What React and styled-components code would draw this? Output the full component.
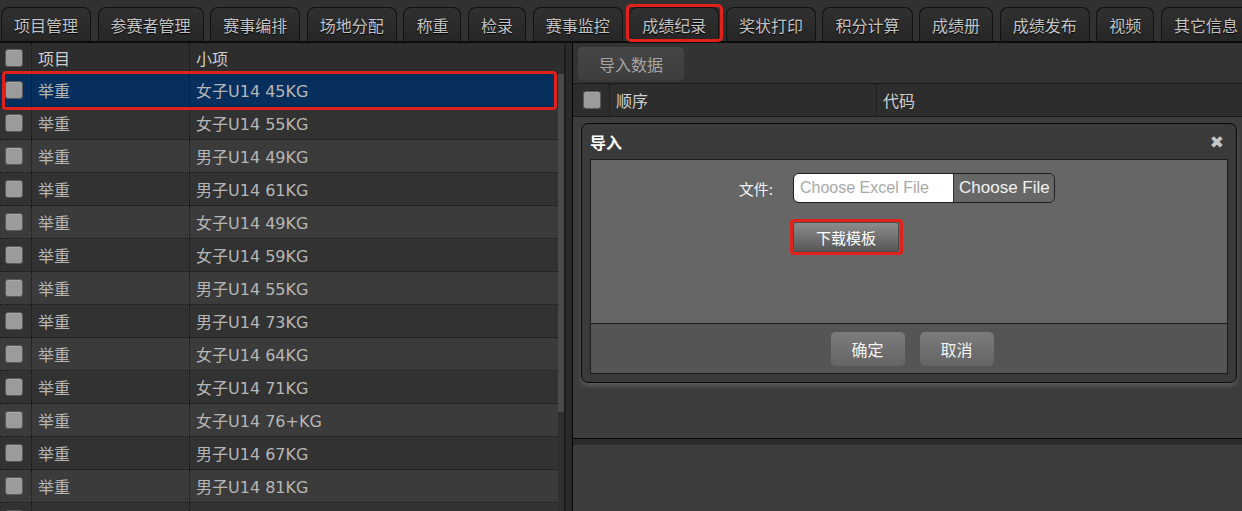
import styled, { createGlobalStyle, css } from "styled-components";

const GlobalStyle = createGlobalStyle`
  html, body {
    margin: 0;
    padding: 0;
    background: #3c3c3c;
    overflow: hidden;
  }
  body {
    font-family: "DejaVu Sans", "Noto Sans CJK SC", sans-serif;
    font-size: 16px;
  }
  * {
    box-sizing: border-box;
  }
`;

const RED = "#e3211b";

const Page = styled.div`
  width: 1242px;
  height: 511px;
  display: flex;
  flex-direction: column;
  overflow: hidden;
`;

const TabBar = styled.div`
  height: 43px;
  flex: none;
  display: flex;
  align-items: flex-end;
  gap: 6.6px;
  padding-left: 1px;
  background: #313131;
  border-bottom: 2px solid #0c0c0c;
  white-space: nowrap;
`;

const Tab = styled.div`
  position: relative;
  flex: none;
  height: 34px;
  padding: 0 12px;
  display: flex;
  align-items: center;
  border: 1px solid #121212;
  border-bottom: none;
  border-radius: 8px 8px 0 0;
  background: linear-gradient(#303030, #262626);
  color: #c2c2c2;
  font-family: "Noto Sans CJK SC", sans-serif;
  font-size: 16px;
  text-shadow: 0 1px 1px #000;

  ${(p) =>
    p.$marked &&
    css`
      &::after {
        content: "";
        position: absolute;
        left: -4px;
        right: -5px;
        top: -4px;
        bottom: -1px;
        border: 3.5px solid ${RED};
        border-radius: 5px;
      }
    `}
`;

const Main = styled.div`
  flex: 1;
  display: flex;
  min-height: 0;
`;

const LeftPanel = styled.div`
  width: 564px;
  flex: none;
  display: flex;
`;

const Grid = styled.div`
  width: 558px;
  flex: none;
  background: #333;
`;

const ScrollTrack = styled.div`
  width: 6px;
  flex: none;
  display: flex;
  flex-direction: column;
  background: #2f2f2f;
`;

const ScrollHead = styled.div`
  height: 31px;
  background: #2d2d2d;
`;

const ScrollThumb = styled.div`
  height: 338px;
  background: #4a4a4a;
`;

const Row = styled.div`
  position: relative;
  height: ${(p) => (p.$head ? 31 : 33)}px;
  display: grid;
  grid-template-columns: 32px 158px 1fr;
  background: ${(p) =>
    p.$selected ? "#062f5e" : p.$head ? "#2d2d2d" : p.$light ? "#3b3b3b" : "#323232"};
  border-bottom: 1px dotted #151515;
  color: ${(p) => (p.$head ? "#cfcfcf" : "#b6b6b6")};

  ${(p) =>
    p.$selected &&
    css`
      z-index: 1;

      &::after {
        content: "";
        position: absolute;
        left: 2px;
        right: 1px;
        top: -3.5px;
        bottom: -4px;
        border: 3.5px solid ${RED};
        border-radius: 4px;
      }
    `}
`;

const Cell = styled.div`
  display: flex;
  align-items: center;
  padding-left: ${(p) => (p.$box ? 5 : 6)}px;
  border-right: ${(p) => (p.$last ? "none" : "1px dotted #151515")};
  overflow: hidden;
  white-space: nowrap;
`;

const CheckBox = styled.span`
  width: 18px;
  height: 18px;
  border-radius: 3px;
  background: #9b9b9b;
  border: 1px solid #5a5a5a;
  box-shadow: inset 0 1px 0 #aaa;
`;

const Splitter = styled.div`
  width: 9px;
  flex: none;
  background: #2a2a2a;
  border-left: 2px solid #1c1c1c;
  border-right: 1px solid #050505;
`;

const RightPanel = styled.div`
  position: relative;
  flex: 1;
  display: flex;
  flex-direction: column;
`;

const Toolbar = styled.div`
  height: 40px;
  flex: none;
  padding: 4px 5px 0;
  background: #333;
`;

const ToolButton = styled.button`
  height: 34px;
  padding: 0 21px;
  border: none;
  border-radius: 5px;
  background: linear-gradient(#464646, #3d3d3d);
  color: #a6a6a6;
  font-family: "Noto Sans CJK SC", sans-serif;
  font-size: 16px;
`;

const HeadRow = styled.div`
  height: 34px;
  flex: none;
  display: grid;
  grid-template-columns: 37px 267px 1fr;
  background: #2d2d2d;
  border-top: 1px solid #1a1a1a;
  border-bottom: 1px solid #1a1a1a;
  color: #cfcfcf;
`;

const HeadBoxCell = styled(Cell)`
  padding-left: 10px;
`;

const GridBody = styled.div`
  height: 322px;
  flex: none;
  background: #3c3c3c;
  border-bottom: 1px solid #050505;
`;

const Band = styled.div`
  height: 6px;
  flex: none;
  background: #2b2b2b;
`;

const Rest = styled.div`
  flex: 1;
  background: #3c3c3c;
`;

const Dialog = styled.div`
  position: absolute;
  left: 8px;
  top: 80px;
  width: 656px;
  height: 260px;
  display: flex;
  flex-direction: column;
  padding: 0 8px 8px;
  background: #3a3a3a;
  border: 1px solid #0a0a0a;
  border-radius: 7px;
  box-shadow: 0 3px 4px rgba(150, 150, 150, 0.35);
`;

const DialogTitle = styled.div`
  height: 35px;
  flex: none;
  display: flex;
  align-items: center;
  justify-content: space-between;
  color: #fff;
  font-family: "Noto Sans CJK SC", sans-serif;
  font-weight: bold;
  font-size: 16px;
`;

const Close = styled.span`
  color: #c4c4c4;
  font-family: "DejaVu Sans", sans-serif;
  font-size: 17px;
  margin-right: 4px;
`;

const DialogFrame = styled.div`
  flex: 1;
  display: flex;
  flex-direction: column;
  border: 1px solid #1c1c1c;
`;

const DialogBody = styled.div`
  height: 164px;
  flex: none;
  background: #666;
  border-bottom: 1px solid #1c1c1c;
  padding: 13px 0 0 144px;
  display: grid;
  grid-template-columns: 58px auto;
  grid-auto-rows: min-content;
  row-gap: 19px;
  justify-content: start;
`;

const Label = styled.label`
  align-self: center;
  text-align: right;
  padding-right: 20px;
  color: #f2f2f2;
  font-family: "Noto Sans CJK SC", sans-serif;
  font-size: 15px;
`;

const FileBox = styled.div`
  width: 262px;
  height: 30px;
  display: flex;
  border: 1px solid #1e1e1e;
  border-radius: 6px;
  overflow: hidden;
  font-family: "Liberation Sans", sans-serif;
`;

const FileText = styled.div`
  width: 159px;
  flex: none;
  display: flex;
  align-items: center;
  padding-left: 6px;
  background: #fff;
  color: #a9a9a9;
  font-size: 16px;
`;

const FileButton = styled.div`
  flex: 1;
  display: flex;
  align-items: center;
  padding-left: 5px;
  background: #676767;
  border-left: 1px solid #333;
  color: #f2f2f2;
  font-size: 17px;
`;

const TemplateButton = styled.button`
  position: relative;
  grid-column: 2;
  justify-self: start;
  width: 106px;
  height: 30px;
  border: 1px solid #4a4a4a;
  border-radius: 3px;
  background: linear-gradient(#8c8c8c, #575757);
  color: #fff;
  font-family: "Noto Sans CJK SC", sans-serif;
  font-size: 15px;

  &::after {
    content: "";
    position: absolute;
    left: -4.5px;
    right: -5px;
    top: -4.5px;
    bottom: -3.5px;
    border: 3.5px solid ${RED};
    border-radius: 4px;
  }
`;

const DialogFooter = styled.div`
  flex: 1;
  display: flex;
  justify-content: center;
  align-items: flex-start;
  gap: 15px;
  padding-top: 8px;
  padding-left: 6px;
  background: #555;
`;

const FooterButton = styled.button`
  width: 74px;
  height: 34px;
  border: none;
  border-radius: 5px;
  background: linear-gradient(#7c7c7c, #646464);
  color: #f4f4f4;
  font-family: "Noto Sans CJK SC", sans-serif;
  font-size: 16px;
`;

const tabs = [
  "项目管理", "参赛者管理", "赛事编排", "场地分配", "称重", "检录", "赛事监控",
  "成绩纪录", "奖状打印", "积分计算", "成绩册", "成绩发布", "视频", "其它信息",
];

const events = [
  "女子U14 45KG", "女子U14 55KG", "男子U14 49KG", "男子U14 61KG", "女子U14 49KG",
  "女子U14 59KG", "男子U14 55KG", "男子U14 73KG", "女子U14 64KG", "女子U14 71KG",
  "女子U14 76+KG", "男子U14 67KG", "男子U14 81KG",
];

export default function App() {
  return (
    <Page>
      <GlobalStyle />
      <TabBar>
        {tabs.map((t) => (
          <Tab key={t} $marked={t === "成绩纪录"}>{t}</Tab>
        ))}
      </TabBar>
      <Main>
        <LeftPanel>
          <Grid>
            <Row $head>
              <Cell $box><CheckBox /></Cell>
              <Cell>项目</Cell>
              <Cell $last>小项</Cell>
            </Row>
            {events.map((e, i) => (
              <Row key={e} $selected={i === 0} $light={i % 2 === 0}>
                <Cell $box><CheckBox /></Cell>
                <Cell>举重</Cell>
                <Cell $last>{e}</Cell>
              </Row>
            ))}
            {/* next row, only its top edge shows */}
            <Row $light={false}>
              <Cell $box><CheckBox /></Cell>
              <Cell />
              <Cell $last />
            </Row>
          </Grid>
          <ScrollTrack>
            <ScrollHead />
            <ScrollThumb />
          </ScrollTrack>
        </LeftPanel>
        <Splitter />
        <RightPanel>
          <Toolbar>
            <ToolButton>导入数据</ToolButton>
          </Toolbar>
          <HeadRow>
            <HeadBoxCell><CheckBox /></HeadBoxCell>
            <Cell>顺序</Cell>
            <Cell $last>代码</Cell>
          </HeadRow>
          <GridBody />
          <Band />
          <Rest />

          <Dialog>
            <DialogTitle>
              导入
              <Close>✖</Close>
            </DialogTitle>
            <DialogFrame>
              <DialogBody>
                <Label>文件:</Label>
                <FileBox>
                  <FileText>Choose Excel File</FileText>
                  <FileButton>Choose File</FileButton>
                </FileBox>
                <TemplateButton>下载模板</TemplateButton>
              </DialogBody>
              <DialogFooter>
                <FooterButton>确定</FooterButton>
                <FooterButton>取消</FooterButton>
              </DialogFooter>
            </DialogFrame>
          </Dialog>
        </RightPanel>
      </Main>
    </Page>
  );
}
